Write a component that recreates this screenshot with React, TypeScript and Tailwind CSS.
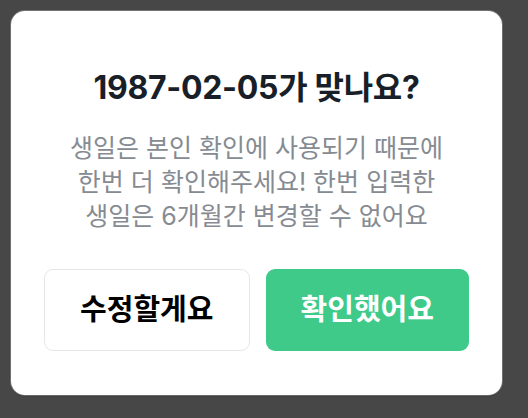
import React from "react";

export default function App() {
  return (
    <div className="w-[528px] h-[418px] bg-[#474747] p-[11px] pr-[26px] pb-[23px]">
      <div
        className="w-[491px] h-[384px] bg-white rounded-[14px] shadow-[0_0_0_1px_rgba(255,255,255,0.25),0_1px_2px_rgba(0,0,0,0.3)] flex flex-col items-center pt-[57px] px-[33px]"
        style={{ fontFamily: "Inter, 'Noto Sans CJK KR', sans-serif" }}
      >
        <h1 className="text-[32px] leading-[40px] font-bold text-[#191f28] tracking-[-0.3px]">
          1987-02-05가 맞나요?
        </h1>
        <p className="mt-[23px] text-[25px] leading-[34px] text-[#868b92] text-center whitespace-nowrap">
          생일은 본인 확인에 사용되기 때문에
          <br />
          한번 더 확인해주세요! 한번 입력한
          <br />
          생일은 6개월간 변경할 수 없어요
        </p>
        <div className="mt-[36px] w-full flex gap-[16px]">
          <button className="flex-1 h-[82px] rounded-[9px] border border-[#e5e8eb] bg-white text-[29px] font-bold text-black">
            수정할게요
          </button>
          <button className="flex-1 h-[82px] rounded-[9px] bg-[#3fca8a] text-[29px] font-bold text-white">
            확인했어요
          </button>
        </div>
      </div>
    </div>
  );
}
